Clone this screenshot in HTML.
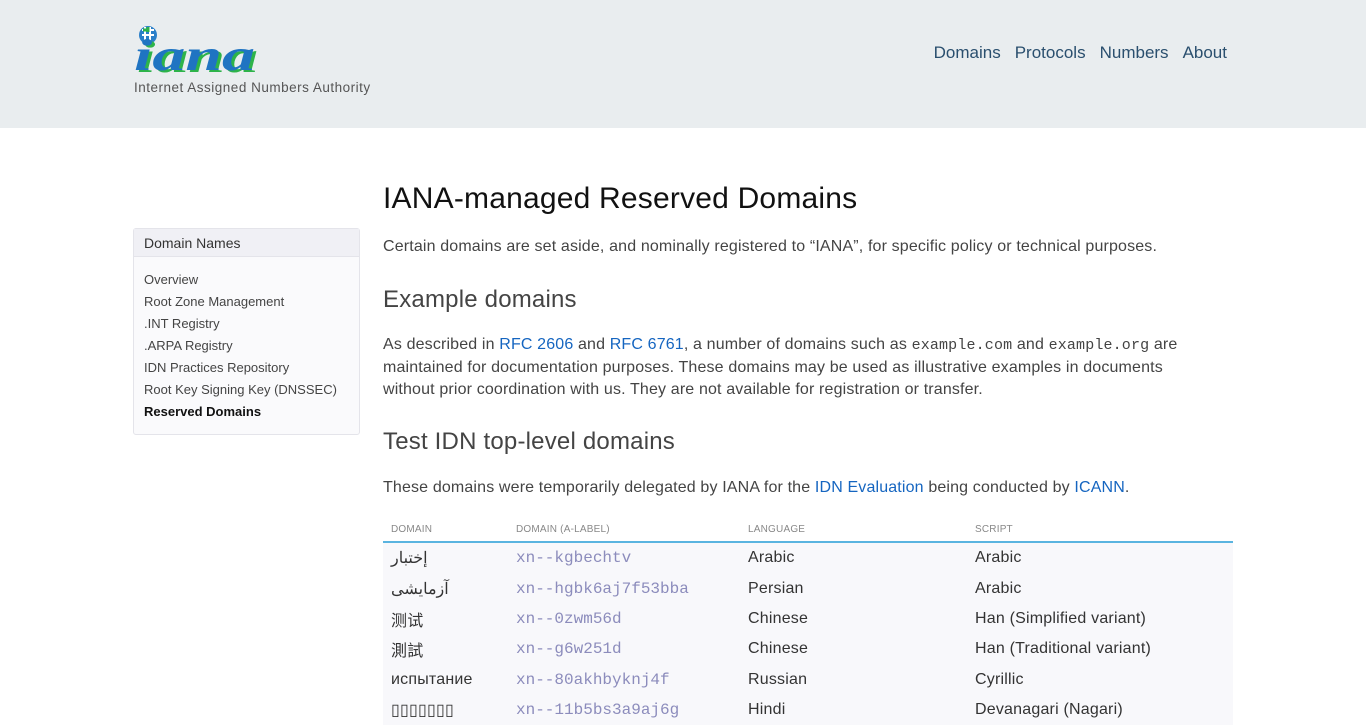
<!DOCTYPE html>
<html><head><meta charset="utf-8"><style>
body{margin:0;background:#fff;font-family:"Liberation Sans","Noto Sans CJK SC",sans-serif;color:#333;}
.hdr{height:128px;background:#e9edef;position:relative;}
.logo{position:absolute;left:134px;top:24px;}
.tag{position:absolute;left:134px;top:80px;font-size:13.5px;color:#555;letter-spacing:.5px}
.nav{position:absolute;right:139px;top:43px;font-size:17px;}
.nav a{color:#2a4f6e;text-decoration:none;margin-left:14px}
.side{position:absolute;left:133px;top:228px;width:225px;height:205px;border:1px solid #e4e4ea;border-radius:3px;background:#fafafc}
.side .t{height:27px;background:#f0f0f5;border-bottom:1px solid #e4e4ea;font-size:14px;line-height:29px;padding-left:10px;color:#333}
.side ul{list-style:none;margin:0;padding:13px 0 0 10px;font-size:13px;color:#444}
.side li{height:22px;line-height:20px}
.main{position:absolute;left:383px;top:0;width:850px}
h1{position:absolute;top:182px;margin:0;font-weight:normal;font-size:30px;color:#111;white-space:nowrap;letter-spacing:.2px}
h2{position:absolute;margin:0;font-weight:normal;font-size:24px;color:#444;white-space:nowrap;letter-spacing:.2px}
p{position:absolute;margin:0;font-size:16px;line-height:22px;color:#444;width:830px;letter-spacing:.15px}
a{color:#1565c0;text-decoration:none}
code{font-family:"Liberation Mono",monospace;font-size:15px}
table{position:absolute;top:519px;left:0;width:850px;border-collapse:collapse;font-size:16px;letter-spacing:.2px}
th{font-weight:normal;font-size:10px;color:#888;text-align:left;padding:5px 8px 6px;border-bottom:2px solid #5ab4e0}
td{background:#f8f8fb;height:30.4px;padding:0 8px;color:#333}
td.m{font-family:"Liberation Mono",monospace;color:#8c8cbc;font-size:16px;letter-spacing:0}
</style></head><body>
<div class="hdr">
<svg class="logo" width="130" height="52" viewBox="0 0 130 52">
<circle cx="14" cy="11" r="9" fill="#2a7fc9"/>
<path d="M8 6h12M8 11h12M11 3v16M16 3v16" stroke="#fff" stroke-width="2"/>
<path d="M9 6h4M14 3v5" stroke="#2db34a" stroke-width="3"/>
<g transform="scale(1.5,1)">
<text x="2" y="48" font-family="Liberation Serif" font-style="italic" font-weight="bold" font-size="44" fill="#2db34a">iana</text>
<text x="0" y="46" font-family="Liberation Serif" font-style="italic" font-weight="bold" font-size="44" fill="#1f74c2">iana</text>
</g>
</svg>
<div class="tag">Internet Assigned Numbers Authority</div>
<div class="nav"><a>Domains</a><a>Protocols</a><a>Numbers</a><a>About</a></div>
</div>
<div class="side"><div class="t">Domain Names</div>
<ul><li>Overview</li><li>Root Zone Management</li><li>.INT Registry</li><li>.ARPA Registry</li><li>IDN Practices Repository</li><li>Root Key Signing Key (DNSSEC)</li><li><b style="color:#111">Reserved Domains</b></li></ul></div>
<div class="main">
<h1>IANA-managed Reserved Domains</h1>
<p style="top:236px">Certain domains are set aside, and nominally registered to “IANA”, for specific policy or technical purposes.</p>
<h2 style="top:286px">Example domains</h2>
<p style="top:334px">As described in <a>RFC 2606</a> and <a>RFC 6761</a>, a number of domains such as <code>example.com</code> and <code>example.org</code> are maintained for documentation purposes. These domains may be used as illustrative examples in documents without prior coordination with us. They are not available for registration or transfer.</p>
<h2 style="top:428px">Test IDN top-level domains</h2>
<p style="top:477px">These domains were temporarily delegated by IANA for the <a>IDN Evaluation</a> being conducted by <a>ICANN</a>.</p>
<table>
<tr><th style="width:109px">DOMAIN</th><th style="width:216px">DOMAIN (A-LABEL)</th><th style="width:211px">LANGUAGE</th><th>SCRIPT</th></tr>
<tr><td>إختبار</td><td class="m">xn--kgbechtv</td><td>Arabic</td><td>Arabic</td></tr>
<tr><td>آزمایشی</td><td class="m">xn--hgbk6aj7f53bba</td><td>Persian</td><td>Arabic</td></tr>
<tr><td>测试</td><td class="m">xn--0zwm56d</td><td>Chinese</td><td>Han (Simplified variant)</td></tr>
<tr><td>測試</td><td class="m">xn--g6w251d</td><td>Chinese</td><td>Han (Traditional variant)</td></tr>
<tr><td>испытание</td><td class="m">xn--80akhbyknj4f</td><td>Russian</td><td>Cyrillic</td></tr>
<tr><td>▯▯▯▯▯▯▯</td><td class="m">xn--11b5bs3a9aj6g</td><td>Hindi</td><td>Devanagari (Nagari)</td></tr>
</table>
</div>
</body></html>
